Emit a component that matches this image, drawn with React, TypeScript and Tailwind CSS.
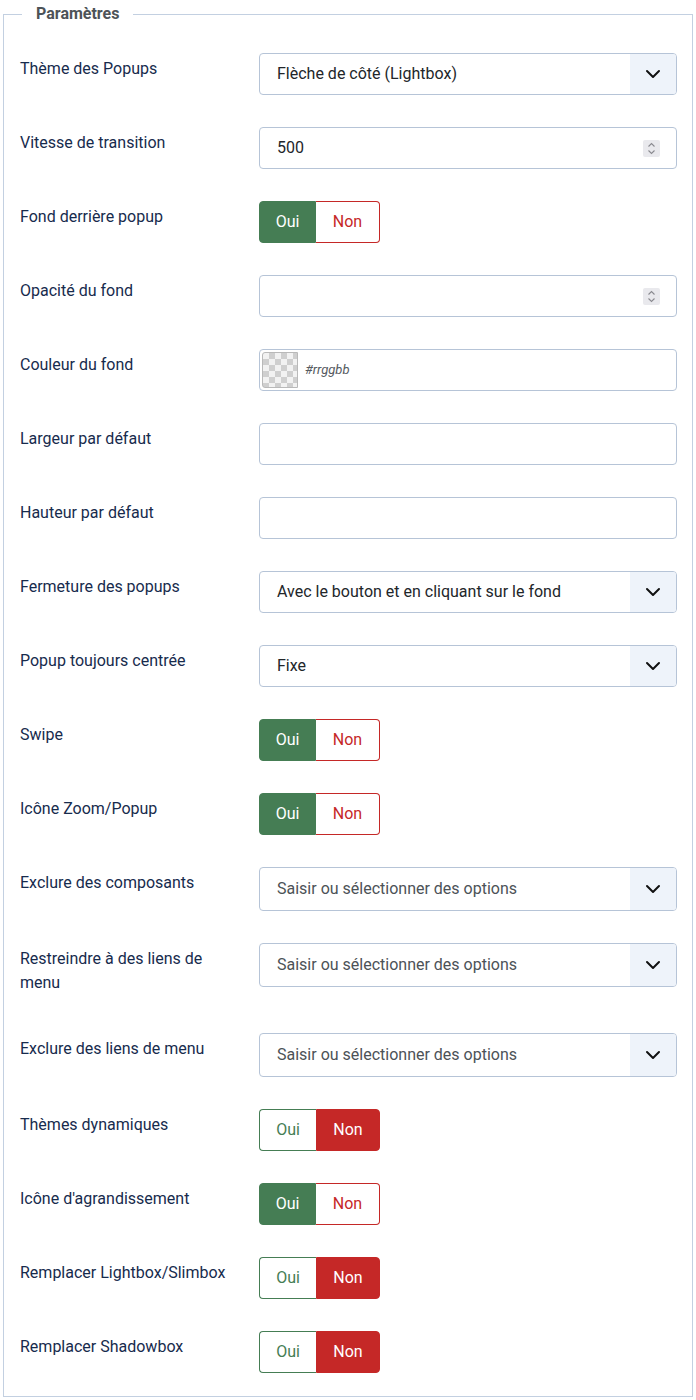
import React from "react";

const FONT = { fontFamily: "Roboto, 'Liberation Sans', sans-serif" };

function Chevron() {
  return (
    <svg width="16" height="10" viewBox="0 0 16 10" fill="none">
      <path d="M2 2l6 6 6-6" stroke="#111" strokeWidth="2" strokeLinecap="round" strokeLinejoin="round" />
    </svg>
  );
}

function Select({ value, placeholder, tall }: { value?: string; placeholder?: string; tall?: boolean }) {
  return (
    <div
      className={`flex w-full ${tall ? "h-[44px]" : "h-[42px]"} items-stretch overflow-hidden rounded-[4px] border border-[#b6c4d7] bg-white`}
    >
      <div className={`flex flex-1 items-center pl-[17px] text-base ${placeholder ? "text-[#4c5257]" : "text-[#22262a]"}`}>
        {value ?? placeholder}
      </div>
      <div className="flex w-[46px] items-center justify-center bg-[#eef3fa]">
        <Chevron />
      </div>
    </div>
  );
}

function Spinner() {
  return (
    <div className="flex h-[17px] w-[17px] flex-col items-center justify-center rounded-[2px] bg-[#e9e9ed]">
      <svg width="9" height="13" viewBox="0 0 9 13" fill="none">
        <path d="M1.5 4.5l3-3 3 3" stroke="#8a8a90" strokeWidth="1.1" />
        <path d="M1.5 8.5l3 3 3-3" stroke="#8a8a90" strokeWidth="1.1" />
      </svg>
    </div>
  );
}

function NumberInput({ value }: { value?: string }) {
  return (
    <div className="flex h-[42px] w-full items-center justify-between rounded-[4px] border border-[#b6c4d7] bg-white pl-[17px] pr-[16px] text-base text-[#22262a]">
      <span>{value ?? ""}</span>
      <Spinner />
    </div>
  );
}

function TextInput() {
  return <div className="h-[42px] w-full rounded-[4px] border border-[#b6c4d7] bg-white" />;
}

function ColorInput() {
  return (
    <div className="flex h-[42px] w-full items-center gap-[7px] rounded-[4px] border border-[#b6c4d7] bg-white pl-[2px]">
      <div className="h-[36px] w-[36px] rounded-l-[3px] border border-[#b9b9b9] bg-[repeating-conic-gradient(#cfcfcf_0%_25%,#f2f2f2_0%_50%)] bg-[length:12px_12px]" />
      <span className="text-[13px] italic text-[#555a60]">#rrggbb</span>
    </div>
  );
}

function Toggle({ on }: { on: boolean }) {
  return (
    <div className="flex h-[42px] text-base">
      <div
        className={`flex w-[57px] items-center justify-center rounded-l-[4px] border ${
          on ? "border-[#457d54] bg-[#457d54] text-white" : "border-r-0 border-[#457d54] bg-white text-[#457d54]"
        }`}
      >
        Oui
      </div>
      <div
        className={`flex w-[64px] items-center justify-center rounded-r-[4px] border ${
          on ? "border-l-0 border-[#c52827] bg-white text-[#c52827]" : "border-[#c52827] bg-[#c52827] text-white"
        }`}
      >
        Non
      </div>
    </div>
  );
}

function Row({ label, children }: { label: string; children: React.ReactNode }) {
  return (
    <div className="flex items-start">
      <div className="w-[239px] shrink-0 pr-[28px] pt-[4px] pb-[6px] text-base leading-6 text-[#172b4d]">{label}</div>
      <div className="w-[418px]">{children}</div>
    </div>
  );
}

export default function App() {
  return (
    <div className="bg-white" style={FONT}>
      <fieldset className="mx-[3px] border border-[#c3d0e1] pt-[25px] pb-[23px] pl-[16px] pr-[15px]">
        <legend className="ml-[2px] px-[14px] text-base font-bold leading-7 text-[#4d5358]">Paramètres</legend>
        <div className="flex flex-col gap-8">
          <Row label="Thème des Popups">
            <Select value="Flèche de côté (Lightbox)" />
          </Row>
          <Row label="Vitesse de transition">
            <NumberInput value="500" />
          </Row>
          <Row label="Fond derrière popup">
            <Toggle on />
          </Row>
          <Row label="Opacité du fond">
            <NumberInput />
          </Row>
          <Row label="Couleur du fond">
            <ColorInput />
          </Row>
          <Row label="Largeur par défaut">
            <TextInput />
          </Row>
          <Row label="Hauteur par défaut">
            <TextInput />
          </Row>
          <Row label="Fermeture des popups">
            <Select value="Avec le bouton et en cliquant sur le fond" />
          </Row>
          <Row label="Popup toujours centrée">
            <Select value="Fixe" />
          </Row>
          <Row label="Swipe">
            <Toggle on />
          </Row>
          <Row label="Icône Zoom/Popup">
            <Toggle on />
          </Row>
          <Row label="Exclure des composants">
            <Select placeholder="Saisir ou sélectionner des options" tall />
          </Row>
          <Row label="Restreindre à des liens de menu">
            <Select placeholder="Saisir ou sélectionner des options" tall />
          </Row>
          <Row label="Exclure des liens de menu">
            <Select placeholder="Saisir ou sélectionner des options" tall />
          </Row>
          <Row label="Thèmes dynamiques">
            <Toggle on={false} />
          </Row>
          <Row label="Icône d'agrandissement">
            <Toggle on />
          </Row>
          <Row label="Remplacer Lightbox/Slimbox">
            <Toggle on={false} />
          </Row>
          <Row label="Remplacer Shadowbox">
            <Toggle on={false} />
          </Row>
        </div>
      </fieldset>
    </div>
  );
}
